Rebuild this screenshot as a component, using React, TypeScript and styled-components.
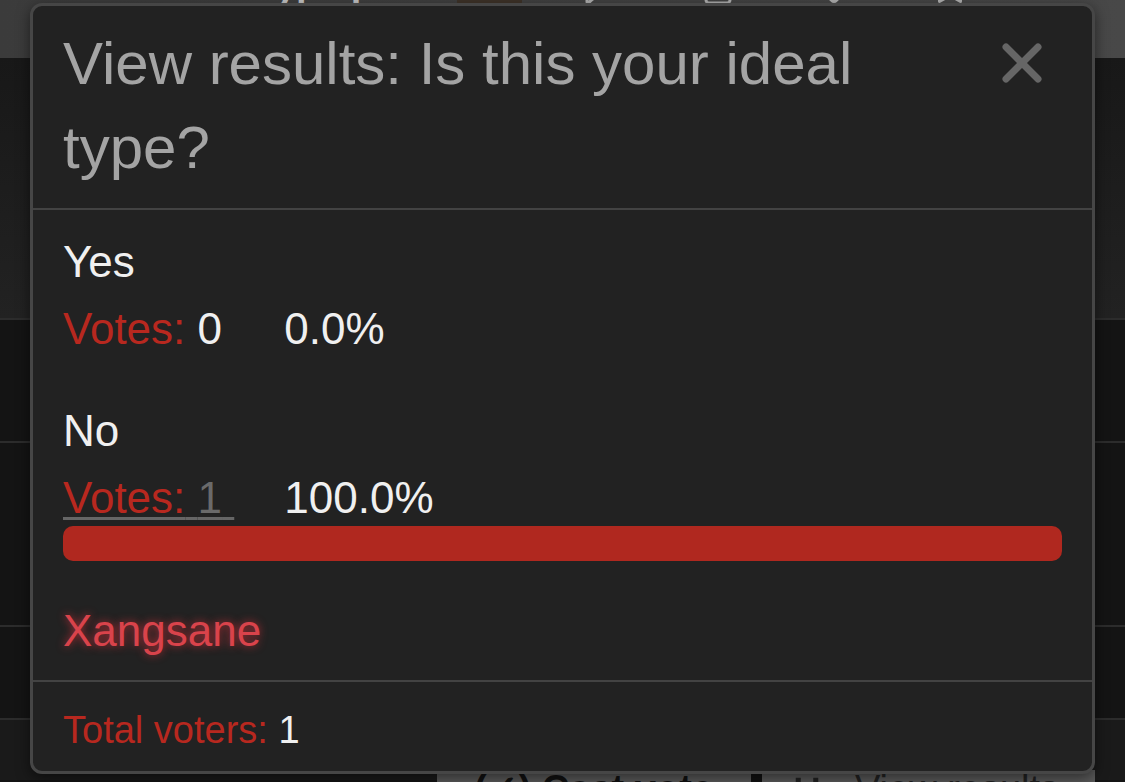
import styled, { createGlobalStyle } from 'styled-components';
import { MessageSquare, Share, Heart, Bookmark, MoreHorizontal } from 'lucide-react';

interface PollOption {
  label: string;
  votes: number;
  percent: number;
}

const options: PollOption[] = [
  { label: 'Yes', votes: 0, percent: 0 },
  { label: 'No', votes: 1, percent: 100 },
];

const voters = ['Xangsane'];

function CloseIcon() {
  return (
    <svg width="40" height="40" viewBox="0 0 40 40">
      <g stroke="#666666" strokeWidth="7" strokeLinecap="round">
        <line x1="4" y1="4" x2="36" y2="36" />
        <line x1="36" y1="4" x2="4" y2="36" />
      </g>
    </svg>
  );
}

function App() {
  const total = options.reduce((sum, o) => sum + o.votes, 0);

  return (
    <Page>
      <GlobalStyle />
      <TopBar>
        <TopRow>
          <TopTitle>Ideal type poll</TopTitle>
          <Avatar />
          <TopIcons>
            <MessageSquare size={36} />
            <Share size={36} />
            <Heart size={36} />
            <Bookmark size={36} />
            <MoreHorizontal size={36} />
          </TopIcons>
        </TopRow>
      </TopBar>
      <Section $height={262} $shade="linear-gradient(#181818, #222222)" />
      <Section $height={123} />
      <Section $height={184} />
      <Section $height={93} />
      <LastSection>
        <ActionBar>
          <CastVote>(✓) Cast vote</CastVote>
          <Divider />
          <ResultsIcon viewBox="0 0 24 24">
            <rect x="3" y="3" width="4" height="18" />
            <rect x="17" y="3" width="4" height="18" />
          </ResultsIcon>
          <ViewResults>View results</ViewResults>
        </ActionBar>
      </LastSection>

      <Overlay>
        <Modal>
          <Header>
            <Title>View results: Is this your ideal type?</Title>
            <CloseButton type="button" aria-label="Close">
              <CloseIcon />
            </CloseButton>
          </Header>

          <Body>
            {options.map((option) => (
              <Option key={option.label}>
                <OptionName>{option.label}</OptionName>
                <VotesRow>
                  <Votes $link={option.votes > 0}>
                    <Red>Votes:</Red> <Count $link={option.votes > 0}>{option.votes}</Count>
                    {'\u00a0'}
                  </Votes>
                  <Percent>{option.percent.toFixed(1)}%</Percent>
                </VotesRow>
                <Bar>
                  <Fill style={{ width: `${option.percent}%` }} />
                </Bar>
              </Option>
            ))}
            <VoterList>
              {voters.map((name) => (
                <Voter key={name}>{name}</Voter>
              ))}
            </VoterList>
          </Body>

          <Footer>
            <Red>Total voters:</Red> <White>{total}</White>
          </Footer>
        </Modal>
      </Overlay>
    </Page>
  );
}

const GlobalStyle = createGlobalStyle`
  html, body {
    margin: 0;
    padding: 0;
    height: 100%;
    overflow: hidden;
    background: #151515;
  }
  body {
    font-family: "Liberation Sans", Arial, Helvetica, sans-serif;
  }
  * {
    box-sizing: border-box;
  }
`;

const Page = styled.div`
  position: relative;
  height: 782px;
  overflow: hidden;
  background: #141414;
`;

const TopBar = styled.header`
  height: 58px;
  overflow: hidden;
  background: linear-gradient(to right, #3b3b3b, #484848);
`;

const TopRow = styled.div`
  display: flex;
  align-items: flex-end;
  height: 39px;
  margin-top: -33px;
  padding-left: 165px;
`;

const TopTitle = styled.span`
  font-size: 38px;
  line-height: 38px;
  font-weight: bold;
  color: #c4c4c4;
  white-space: nowrap;
`;

const Avatar = styled.div`
  width: 65px;
  height: 40px;
  margin-left: 39px;
  background: #3e3329;
  border-radius: 4px;
`;

const TopIcons = styled.div`
  display: flex;
  gap: 80px;
  margin-left: 62px;
  color: #b0b0b0;
  svg {
    flex: none;
  }
`;

const Section = styled.div<{ $height: number; $shade?: string }>`
  height: ${(p) => p.$height}px;
  background: ${(p) => p.$shade || '#141414'};
  border-bottom: 2px solid #2c2c2c;
`;

const LastSection = styled.div`
  height: 60px;
  padding-top: 50px;
  background: #1a1a1a;
`;

const ActionBar = styled.div`
  display: flex;
  align-items: flex-start;
  width: 658px;
  height: 40px;
  margin-left: 437px;
  padding-left: 37px;
  background: #5a5a5a;
  font-size: 38px;
  line-height: 38px;
  color: #111;
`;

const CastVote = styled.span`
  font-weight: bold;
  white-space: nowrap;
`;

const Divider = styled.span`
  flex: none;
  width: 11px;
  height: 40px;
  margin: 2px 0 0 38px;
  background: #111;
`;

const ResultsIcon = styled.svg`
  flex: none;
  width: 30px;
  height: 30px;
  margin: 4px 0 0 30px;
  fill: #222;
`;

const ViewResults = styled.span`
  margin-left: 33px;
  color: #222;
  white-space: nowrap;
`;

const Overlay = styled.div`
  position: absolute;
  inset: 0;
  padding: 3px 30px;
`;

const Modal = styled.div`
  background: #222222;
  border: 3px solid #464646;
  border-radius: 12px;
  box-shadow: 0 4px 14px rgba(0, 0, 0, 0.5);
`;

const Header = styled.div`
  display: flex;
  align-items: flex-start;
  padding: 16px 30px 18px;
  border-bottom: 2px solid #434343;
`;

const Title = styled.h4`
  flex: 1;
  margin: 0;
  font-size: 60px;
  line-height: 84px;
  font-weight: normal;
  color: #a4a4a4;
`;

const CloseButton = styled.button`
  flex: none;
  display: flex;
  width: 40px;
  height: 40px;
  margin: 21px 20px 0 0;
  padding: 0;
  border: 0;
  background: none;
  cursor: pointer;
`;

const Body = styled.div`
  display: flex;
  flex-direction: column;
  gap: 5px;
  padding: 18px 30px 15px;
`;

const Option = styled.div`
  display: flex;
  flex-direction: column;
`;

const OptionName = styled.div`
  font-size: 44px;
  line-height: 68px;
  color: #f0f0f0;
`;

const VotesRow = styled.div`
  margin-top: 5px;
  font-size: 44px;
  line-height: 56px;
  white-space: nowrap;
`;

const Votes = styled.span<{ $link: boolean }>`
  text-decoration: ${(p) => (p.$link ? 'underline' : 'none')};
  text-decoration-color: #666;
  text-decoration-thickness: 3px;
  text-underline-offset: 4px;
`;

const Count = styled.span<{ $link: boolean }>`
  color: ${(p) => (p.$link ? '#6a6a6a' : '#f0f0f0')};
`;

const Percent = styled.span`
  margin-left: 50px;
  color: #f0f0f0;
`;

const Bar = styled.div`
  height: 35px;
`;

const Fill = styled.div`
  height: 100%;
  background: #b0281f;
  border-radius: 10px;
`;

const VoterList = styled.div`
  margin-top: 31px;
`;

const Voter = styled.div`
  font-size: 44px;
  line-height: 68px;
  color: #d9434b;
  text-shadow: 0 0 8px rgba(235, 50, 60, 0.75);
`;

const Footer = styled.div`
  padding: 20px 30px 12px;
  border-top: 2px solid #434343;
  font-size: 38px;
  line-height: 57px;
`;

const Red = styled.span`
  color: #b8281f;
`;

const White = styled.span`
  color: #f0f0f0;
`;

export default App;
